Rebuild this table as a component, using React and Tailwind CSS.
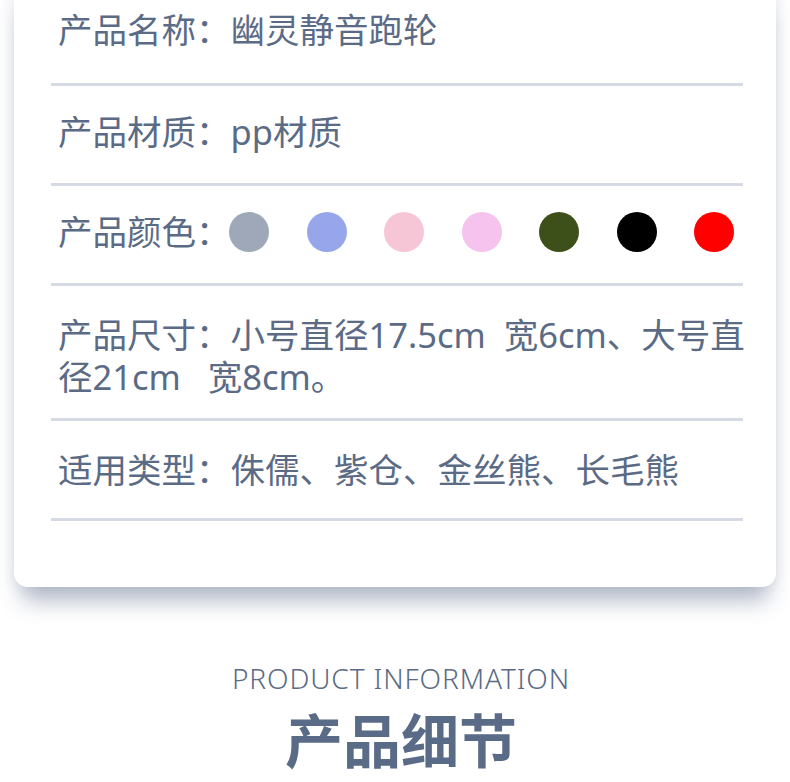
const COLORS = ["#9ea8b8", "#97a6ea", "#f7c6d6", "#f6c3ef", "#3e5019", "#000000", "#ff0000"];

function Divider() {
  return <div className="h-[3px] bg-[#d5dae4]" />;
}

function Row({ className = "", children }) {
  return (
    <>
      <div className={`pl-[7px] ${className}`}>{children}</div>
      <Divider />
    </>
  );
}

export default function App() {
  return (
    <div
      className="min-h-[782px] bg-white overflow-hidden text-[#5b6b86]"
      style={{ fontFamily: '"Noto Sans", "Noto Sans CJK SC", sans-serif' }}
    >
      {/* spec card, top is scrolled off */}
      <div className="mx-[14px] -mt-[20px] rounded-[14px] bg-white pl-[37px] pr-[33px] pt-[29px] pb-[66px] shadow-[0_22px_22px_-8px_rgba(80,95,130,0.42),0_0_16px_rgba(90,105,140,0.14)]">
        <div className="text-[34.5px] leading-[42px] whitespace-nowrap">
          <Row className="pb-[32px]">产品名称：幽灵静音跑轮</Row>
          <Row className="pt-[25px] pb-[30px]">产品材质：pp材质</Row>
          <Row className="pt-[25px] pb-[30px]">
            <div className="flex items-center">
              <span className="w-[171px]">产品颜色：</span>
              <div className="flex gap-[37.5px]">
                {COLORS.map((c) => (
                  <span key={c} className="block w-[40px] h-[40px] rounded-full" style={{ backgroundColor: c }} />
                ))}
              </div>
            </div>
          </Row>
          <Row className="pt-[28px] pb-[20px]">
            产品尺寸：小号直径17.5cm&nbsp;&nbsp;宽6cm、大号直
            <br />
            径21cm&nbsp;&nbsp;&nbsp;宽8cm。
          </Row>
          <Row className="pt-[28px] pb-[27px]">适用类型：侏儒、紫仓、金丝熊、长毛熊</Row>
        </div>
      </div>

      {/* section heading */}
      <div className="flex flex-col items-center pt-[74px] pl-[12px]">
        <p className="text-[28px] font-light leading-[34px] tracking-[0.9px]">PRODUCT INFORMATION</p>
        <h2 className="mt-[11px] text-[58px] font-bold leading-[64px] text-[#5a6b88]" style={{ fontFamily: '"Noto Sans CJK SC", sans-serif' }}>
          产品细节
        </h2>
      </div>
    </div>
  );
}
